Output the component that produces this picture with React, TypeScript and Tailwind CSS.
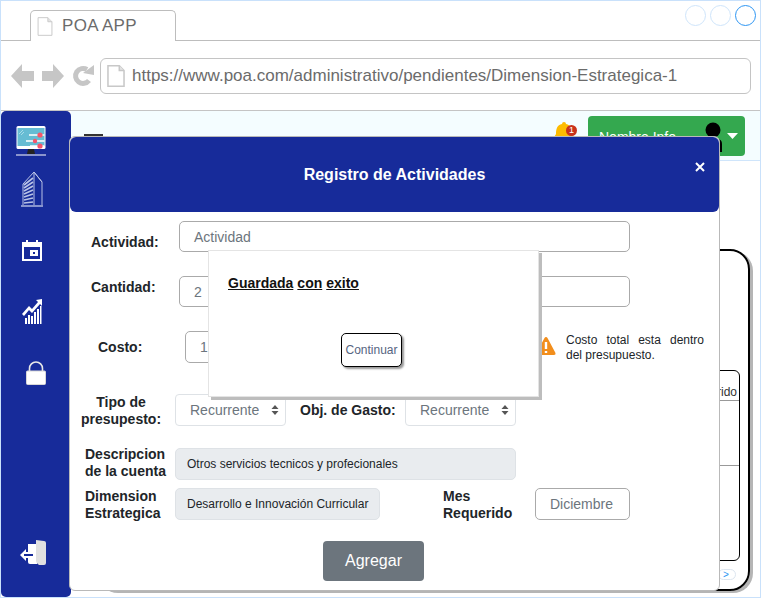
import React from 'react';

function FileIcon({ className = '', thick = false }: { className?: string; thick?: boolean }) {
  return (
    <svg viewBox="0 0 16 20" className={className} fill="#fff" stroke="#c8c8c8" strokeWidth={thick ? 1.4 : 1}>
      <path d="M0.7 0.7H11L15.3 5V19.3H0.7Z" />
      <path d="M11 0.7V5H15.3" fill="#e4e4e4" />
    </svg>
  );
}

function MonitorIcon() {
  return (
    <svg width="30" height="30" viewBox="0 0 30 30">
      <rect x="0.5" y="0" width="29" height="23" rx="1.5" fill="#fff" />
      <rect x="1.5" y="2" width="27" height="18" fill="#66bcd3" />
      <path d="M3 8l4-4M5 9l3-3" stroke="#a9dce9" strokeWidth="1" />
      <path d="M13 9H28.5M10 15H28.5M14 20H28.5" stroke="#fff" strokeWidth="1.6" />
      <circle cx="24" cy="9" r="2.6" fill="#f4566b" />
      <circle cx="19" cy="15" r="2.2" fill="#f4566b" />
      <circle cx="24" cy="20" r="2.6" fill="#f4566b" />
      <path d="M12 23H18L19 28H11Z" fill="#222" />
      <path d="M0 29H30" stroke="#fff" strokeWidth="1" />
    </svg>
  );
}

function BuildingIcon() {
  return (
    <svg width="22" height="36" viewBox="0 0 22 36" fill="none" stroke="#b9c2e6" strokeWidth="1">
      <path d="M2 34V13L13 1L21 11V34" />
      <path d="M13 1V34M13 1L21 11" />
      <path d="M3 14L12 7M3 17L12 11M3 20L12 15M3 23L12 19M3 26L12 23M3 29L12 27M3 32L12 31" strokeWidth="1.6" />
      <path d="M0 35H22" strokeWidth="1.4" />
    </svg>
  );
}

function CalendarIcon() {
  return (
    <svg width="20" height="21" viewBox="0 0 20 21" fill="none">
      <rect x="1" y="3" width="18" height="17" stroke="#fff" strokeWidth="2" />
      <rect x="1" y="3" width="18" height="4" fill="#fff" />
      <path d="M5 0V4M15 0V4" stroke="#fff" strokeWidth="2" />
      <rect x="8" y="10" width="8" height="6" fill="#fff" />
      <rect x="11" y="12" width="2" height="2" fill="#172b9a" />
    </svg>
  );
}

function ChartIcon() {
  return (
    <svg width="20" height="25" viewBox="0 0 20 25" fill="#fff">
      <path d="M0 15L7 7L10 10L16 3L14 1L20 0V7L18 5L10 14L7 11L2 17Z" />
      <path d="M3 19h2v6H3zM6 16h2v9H6zM9 17h2v8H9zM12 13h2v12h-2zM15 10h2v15h-2zM18 7h1.5v18H18z" />
    </svg>
  );
}

function LockIcon() {
  return (
    <svg width="20" height="24" viewBox="0 0 20 24" fill="none">
      <path d="M3.5 11V7.5a6.5 6.5 0 0 1 13 0V11" stroke="#e8e8e8" strokeWidth="1.6" />
      <rect x="0.5" y="10" width="19" height="13.5" rx="1" fill="#fff" stroke="#d8d8d8" />
    </svg>
  );
}

function LogoutIcon() {
  return (
    <svg width="28" height="28" viewBox="0 0 28 28">
      <path d="M9 5H18V25H11Q9 25 9 23Z" fill="#fff" />
      <path d="M17 1L25 2Q27 2 27 4V24Q27 26 25 26L20 26Q17 24 17 22Z" fill="#e0e0e0" />
      <path d="M1 16L7 10V13H14V19H7V22Z" fill="#fff" />
      <path d="M5 16H14" stroke="#172b9a" strokeWidth="2" />
    </svg>
  );
}

function SelectBox({ className = '' }: { className?: string }) {
  return (
    <div className={`flex h-[32px] w-[111px] items-center justify-between rounded border border-[#dee2e6] bg-white pl-[14px] pr-[6px] text-sm text-[#6c757d] ${className}`}>
      <span>Recurrente</span>
      <svg width="8" height="10" viewBox="0 0 8 10" fill="#555">
        <path d="M4 0L7.5 4H0.5ZM4 10L0.5 6H7.5Z" />
      </svg>
    </div>
  );
}

export default function App() {
  return (
    <div className="relative h-[598px] w-[761px] overflow-hidden border border-[#c9e1fb] bg-white font-['Liberation_Sans',Arial,sans-serif]">
      {/* browser chrome */}
      <div className="flex h-[40px] items-end border-b border-[#bdbdbd] pl-[29px]">
        <div className="-mb-px flex h-[31px] w-[146px] items-center rounded-t-[5px] border border-b-0 border-[#bdbdbd] bg-white pl-[6px]">
          <FileIcon className="h-[19px] w-[16px]" />
          <span className="ml-[9px] text-[17px] tracking-[0.3px] text-[#6b6b6b]">POA APP</span>
        </div>
        <div className="ml-auto mb-[3px] flex gap-[4px] self-start pr-[4px] pt-[4px]">
          <span className="h-[21px] w-[21px] rounded-full border border-[#cfe5fb]" />
          <span className="h-[21px] w-[21px] rounded-full border border-[#cfe5fb]" />
          <span className="h-[21px] w-[21px] rounded-full border border-[#2e96f3]" />
        </div>
      </div>
      <div className="flex h-[70px] items-center border-b border-[#c4c4c4] pl-[10px] pr-[9px]">
        <svg width="23" height="24" viewBox="0 0 23 24" fill="#c6c6c6"><path d="M0 12L11 0V7H23V17H11V24Z" /></svg>
        <svg width="22" height="24" viewBox="0 0 22 24" fill="#c6c6c6" className="ml-[8px]"><path d="M22 12L11 0V7H0V17H11V24Z" /></svg>
        <svg width="22" height="22" viewBox="0 0 22 22" fill="none" className="ml-[8px]">
          <path d="M17 15.5A7.5 7.5 0 1 1 15 4.5" stroke="#c6c6c6" strokeWidth="5" />
          <path d="M11 8L22 10V0Z" fill="#c6c6c6" />
        </svg>
        <div className="ml-[6px] flex h-[36px] flex-1 items-center rounded-[6px] border border-[#c4c4c4] pl-[6px]">
          <FileIcon thick className="h-[22px] w-[18px]" />
          <span className="ml-[7px] whitespace-nowrap text-[17px] text-[#6b6b6b]">https://www.poa.com/administrativo/pendientes/Dimension-Estrategica-1</span>
        </div>
      </div>

      {/* app behind the modal */}
      <div className="flex h-[487px]">
        <aside className="flex h-[486px] w-[70px] shrink-0 flex-col items-center rounded-[5px] bg-[#172b9a] pt-[15px]">
          <div className="mr-[10px]"><MonitorIcon /></div>
          <div className="mr-[9px] mt-[15px]"><BuildingIcon /></div>
          <div className="mr-[9px] mt-[33px]"><CalendarIcon /></div>
          <div className="mr-[9px] mt-[38px]"><ChartIcon /></div>
          <div className="mt-[37px]"><LockIcon /></div>
          <div className="mr-[6px] mt-auto mb-[30px]"><LogoutIcon /></div>
        </aside>
        <main className="flex-1">
          <header className="flex h-[50px] items-start border-b border-[#cfe5fb] bg-[#f4fdff] pl-[13px] pr-[15px]">
            <div className="mt-[23px] h-[2px] w-[19px] bg-[#333]" />
            <div className="relative ml-auto mt-[11px] h-[24px] w-[24px]">
              <svg width="22" height="24" viewBox="0 0 22 24" fill="#fdbb00">
                <path d="M11 0a2 2 0 0 1 2 2c5 1 6 5 6 10l3 5H0l3-5c0-5 1-9 6-10a2 2 0 0 1 2-2Z" />
              </svg>
              <span className="absolute left-[13px] top-[3px] flex h-[11px] w-[11px] items-center justify-center rounded-full bg-[#c9321b] text-[9px] leading-none text-white">1</span>
            </div>
            <div className="relative ml-[11px] mt-[5px] h-[40px] w-[157px] rounded-[4px] bg-[#34a84f] pl-[11px] pt-[11px] text-sm text-white">
              Nombre Info
              <svg width="20" height="30" viewBox="0 0 20 30" className="absolute left-[115px] top-[6px]">
                <circle cx="10" cy="8" r="7.5" fill="#000" />
                <path d="M1 30V22q0-5 5-5h8q5 0 5 5v8Z" fill="#000" />
              </svg>
              <svg width="11" height="6" viewBox="0 0 11 6" fill="#fff" className="absolute left-[139px] top-[17px]"><path d="M0 0H11L5.5 6Z" /></svg>
            </div>
          </header>
          <div className="pl-[24px] pr-[10px] pt-[88px]">
            <div className="relative h-[342px] rounded-[20px] border-2 border-black shadow-[3px_2px_0_#b5b5b5]">
              <div className="ml-[20px] mr-[8px] mt-[119px] h-[191px] rounded-[6px] border border-black">
                <div className="h-[30px] border-b border-[#999] pr-[2px] pt-[14px] text-right text-xs leading-[14px] text-[#333]">Requerido</div>
                <div className="mt-[64px] border-b border-[#999]" />
              </div>
              <div className="absolute bottom-[9px] right-[12px] flex h-[11px] w-[18px] items-center justify-start rounded-full border border-[#dde6f0] pl-[4px] text-[10px] leading-none text-[#2e96f3]">&gt;</div>
            </div>
          </div>
        </main>
      </div>

      {/* modal */}
      <div className="absolute left-[68px] top-[135px] h-[455px] w-[651px] rounded-[6px] border border-[#b9b9b9] bg-white">
        <div className="relative flex h-[75px] items-center justify-center rounded-[6px] bg-[#172b9a] text-base font-bold text-white">
          Registro de Actividades
          <svg width="10" height="10" viewBox="0 0 10 10" className="absolute left-[625px] top-[25px]" stroke="#fff" strokeWidth="2"><path d="M1 1L9 9M9 1L1 9" /></svg>
        </div>

        <div className="flex pl-[21px] pt-[9px]">
          <div className="w-[88px] pt-[13px] text-sm font-bold leading-4 text-[#212529]">Actividad:</div>
          <div className="flex h-[31px] w-[451px] items-center rounded-[5px] border border-[#aaaaaa] pl-[14px] text-sm text-[#6c757d]">Actividad</div>
        </div>
        <div className="flex pl-[21px] pt-[24px]">
          <div className="w-[88px] pt-[3px] text-sm font-bold leading-4 text-[#212529]">Cantidad:</div>
          <div className="flex h-[31px] w-[451px] items-center rounded-[5px] border border-[#aaaaaa] pl-[14px] text-sm text-[#6c757d]">2</div>
        </div>
        <div className="flex pl-[28px] pt-[24px]">
          <div className="w-[87px] pt-[8px] text-sm font-bold leading-4 text-[#212529]">Costo:</div>
          <div className="flex h-[32px] w-[200px] items-center rounded-[5px] border border-[#aaaaaa] pl-[14px] text-sm text-[#6c757d]">1</div>
          <svg width="20" height="20" viewBox="0 0 20 20" className="ml-[151px] mt-[5px]">
            <path d="M10 1Q11 1 11.5 2L19.5 17Q20 19 18 19H2Q0 19 .5 17L8.5 2Q9 1 10 1Z" fill="#f28e1c" />
            <path d="M10 6V13M10 15V17" stroke="#fff" strokeWidth="2.4" />
          </svg>
          <p className="ml-[10px] mt-[2px] w-[138px] text-justify text-xs leading-[15px] text-[#212529]">Costo total esta dentro del presupuesto.</p>
        </div>

        <div className="flex items-start pl-[4px] pt-[31px]">
          <div className="mr-[7px] w-[94px] text-center text-sm font-bold leading-[17px] text-[#212529]">Tipo de presupesto:</div>
          <SelectBox />
          <div className="ml-[14px] w-[105px] pt-[8px] text-sm font-bold leading-4 text-[#212529]">Obj. de Gasto:</div>
          <SelectBox />
        </div>

        <div className="flex pl-[15px] pt-[20px]">
          <div className="-mt-[2px] w-[90px] text-sm font-bold leading-[17px] text-[#212529]">Descripcion de la cuenta</div>
          <div className="flex h-[32px] w-[341px] items-center rounded-[5px] border border-[#dee2e6] bg-[#e9ecef] pl-[11px] text-xs text-[#212529]">Otros servicios tecnicos y profecionales</div>
        </div>

        <div className="flex pl-[15px] pt-[8px]">
          <div className="w-[90px] text-sm font-bold leading-[17px] text-[#212529]">Dimension Estrategica</div>
          <div className="flex h-[32px] w-[205px] items-center rounded-[5px] border border-[#dee2e6] bg-[#e9ecef] pl-[11px] text-xs text-[#212529]">Desarrollo e Innovación Curricular</div>
          <div className="ml-[63px] w-[92px] text-sm font-bold leading-[17px] text-[#212529]">Mes Requerido</div>
          <div className="flex h-[32px] w-[95px] items-center justify-center rounded-[5px] border border-[#aaaaaa] pr-[2px] text-sm text-[#6c757d]">Diciembre</div>
        </div>

        <div className="flex justify-center pt-[19px] pr-[42px]">
          <button className="h-[40px] w-[101px] rounded-[4px] bg-[#6c757d] text-base text-white">Agregar</button>
        </div>

        {/* success alert */}
        <div className="absolute left-[138px] top-[113px] flex h-[147px] w-[331px] flex-col border border-[#e4e4e4] bg-white pl-[19px] shadow-[3px_3px_0_#bdbdbd]">
          <p className="mt-[24px] flex gap-[4px] text-sm font-bold leading-4 text-[#111]">
            <span className="underline">Guardada</span>
            <span className="underline">con</span>
            <span className="underline">exito</span>
          </p>
          <button className="ml-[113px] mt-[42px] h-[34px] w-[61px] rounded-[5px] border border-black bg-white text-xs text-[#56657f] shadow-[2px_2px_2px_#999]">Continuar</button>
        </div>
      </div>
    </div>
  );
}
